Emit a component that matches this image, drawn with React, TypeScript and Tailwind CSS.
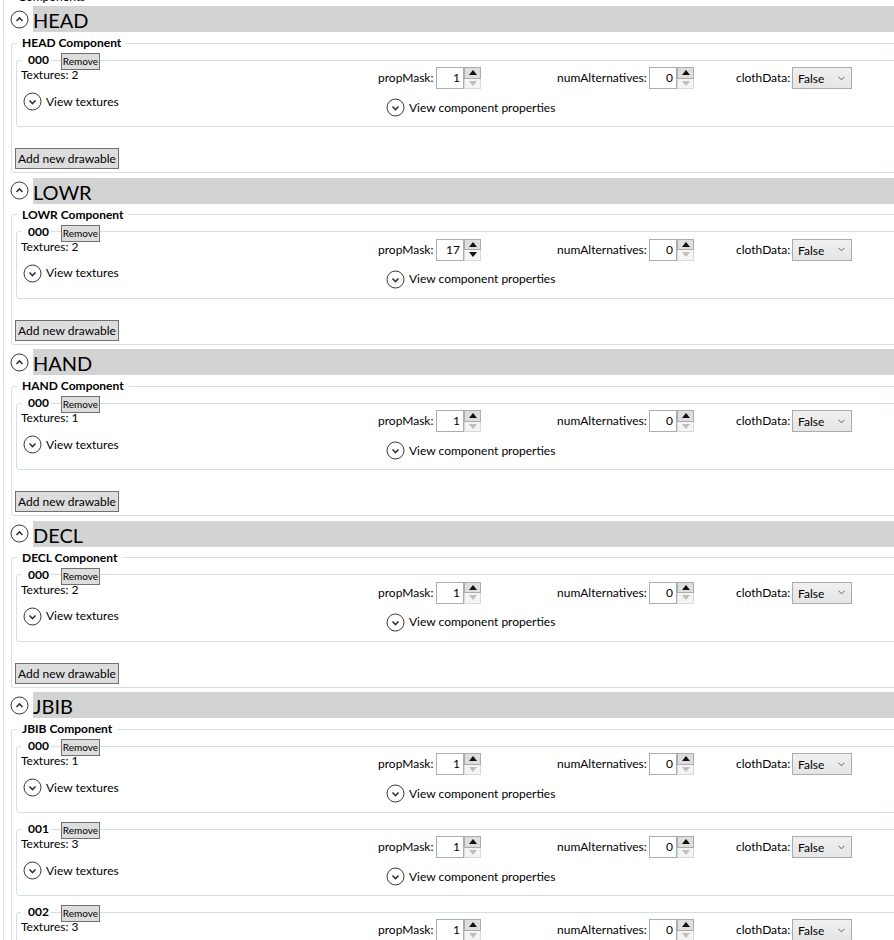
import React from 'react';

type Drawable = { id: string; textures: number; propMask: number };
type Section = { name: string; drawables: Drawable[] };

const SECTIONS: Section[] = [
  { name: 'HEAD', drawables: [{ id: '000', textures: 2, propMask: 1 }] },
  { name: 'LOWR', drawables: [{ id: '000', textures: 2, propMask: 17 }] },
  { name: 'HAND', drawables: [{ id: '000', textures: 1, propMask: 1 }] },
  { name: 'DECL', drawables: [{ id: '000', textures: 2, propMask: 1 }] },
  {
    name: 'JBIB',
    drawables: [
      { id: '000', textures: 1, propMask: 1 },
      { id: '001', textures: 3, propMask: 1 },
      { id: '002', textures: 3, propMask: 1 },
    ],
  },
];

const ExpanderIcon: React.FC<{ up?: boolean }> = ({ up }) => (
  <svg width="19" height="19" viewBox="0 0 19 19" className="shrink-0">
    <circle cx="9.5" cy="9.5" r="8.5" fill="#fff" stroke="#333" strokeWidth="1" />
    {up ? (
      <path d="M6.5 11 L9.5 8 L12.5 11" fill="none" stroke="#333" strokeWidth="1.6" />
    ) : (
      <path d="M6.5 8.5 L9.5 11.5 L12.5 8.5" fill="none" stroke="#333" strokeWidth="1.6" />
    )}
  </svg>
);

const Expander: React.FC<{ label: string }> = ({ label }) => (
  <div className="flex items-center gap-[4px] h-[19px]">
    <ExpanderIcon />
    <span>{label}</span>
  </div>
);

const SpinBox: React.FC<{ value: number; min: number }> = ({ value, min }) => (
  <div className="flex h-[22px] w-[45px]">
    <div className="flex-1 border border-[#abadb3] bg-white text-right pr-[3px] leading-[20px]">{value}</div>
    <div className="flex flex-col w-[17px]">
      <div className="flex-1 flex items-center justify-center bg-[#dedede] border border-[#acacac]">
        <svg width="8" height="5" viewBox="0 0 8 5">
          <path d="M0 5 L4 0 L8 5 Z" fill="#111" />
        </svg>
      </div>
      <div className="flex-1 flex items-center justify-center bg-[#f4f4f4] border border-t-0 border-[#d9d9d9]">
        <svg width="8" height="5" viewBox="0 0 8 5">
          <path d="M0 0 L4 5 L8 0 Z" fill={value > min ? '#111' : '#bfbfbf'} />
        </svg>
      </div>
    </div>
  </div>
);

const ComboBox: React.FC<{ value: string }> = ({ value }) => (
  <div className="flex items-center h-[22px] w-[60px] border border-[#acacac] bg-gradient-to-b from-[#f0f0f0] to-[#e5e5e5] pl-[5px] pr-[6px]">
    <span className="flex-1 pt-[2px]">{value}</span>
    <svg width="7" height="5" viewBox="0 0 7 5">
      <path d="M0.5 0.8 L3.5 3.8 L6.5 0.8" fill="none" stroke="#606060" strokeWidth="1" />
    </svg>
  </div>
);

const DrawableBox: React.FC<{ d: Drawable }> = ({ d }) => (
  <div className="relative mt-[3px] mb-[9px] ml-[1px]">
    <fieldset className="border border-[#d5dfe5] rounded-[3px]">
      <legend className="ml-[4px] pl-[7px] pr-[2px] font-bold leading-[14px]">{d.id}</legend>
      <div className="flex pl-[4px] h-[59px]">
        <div className="w-[357px] flex flex-col">
          <div className="leading-[14px] pt-[1px]">Textures: {d.textures}</div>
          <div className="mt-[10px] ml-[2px]">
            <Expander label="View textures" />
          </div>
        </div>
        <div className="flex flex-col">
          <div className="flex items-center h-[22px]">
            <div className="flex items-center w-[179px]">
              <span className="w-[58px]">propMask:</span>
              <SpinBox value={d.propMask} min={1} />
            </div>
            <div className="flex items-center w-[179px]">
              <span className="w-[92px]">numAlternatives:</span>
              <SpinBox value={0} min={0} />
            </div>
            <div className="flex items-center">
              <span className="w-[56px]">clothData:</span>
              <ComboBox value="False" />
            </div>
          </div>
          <div className="mt-[9px] ml-[8px]">
            <Expander label="View component properties" />
          </div>
        </div>
      </div>
    </fieldset>
    <button className="absolute left-[45px] top-0 w-[39px] h-[17px] bg-[#dddddd] border border-[#707070] text-[10px] leading-[15px]">
      Remove
    </button>
  </div>
);

const ComponentSection: React.FC<{ s: Section }> = ({ s }) => (
  <section>
    <div className="flex items-center h-[26px]">
      <ExpanderIcon up />
      <div className="ml-[4px] flex-1 h-[26px] bg-[#d3d3d3] text-[20px] leading-[28px]">{s.name}</div>
    </div>
    <fieldset className="mt-[4px] ml-[1px] border border-[#d5dfe5] rounded-[3px] pl-[3px] pb-[3px]">
      <legend className="ml-[2px] px-[5px] font-bold leading-[14px]">{s.name} Component</legend>
      {s.drawables.map((d) => (
        <DrawableBox key={d.id} d={d} />
      ))}
      <button className="mt-[12px] w-[104px] h-[21px] bg-[#dddddd] border border-[#707070] leading-[19px] text-left pl-[2px]">
        Add new drawable
      </button>
    </fieldset>
  </section>
);

export default function App() {
  return (
    <div className="h-[940px] w-full overflow-hidden bg-white text-black text-[12px] font-[Lato,sans-serif]">
      <div className="w-[1000px] -mt-[10px] ml-[3px]">
        <fieldset className="border border-[#d5dfe5] rounded-[3px] pl-[6px]">
          <legend className="ml-[3px] px-[5px] leading-[14px]">Components</legend>
          <div className="pt-[2px] flex flex-col gap-[4.5px]">
            {SECTIONS.map((s) => (
              <ComponentSection key={s.name} s={s} />
            ))}
          </div>
        </fieldset>
      </div>
    </div>
  );
}
